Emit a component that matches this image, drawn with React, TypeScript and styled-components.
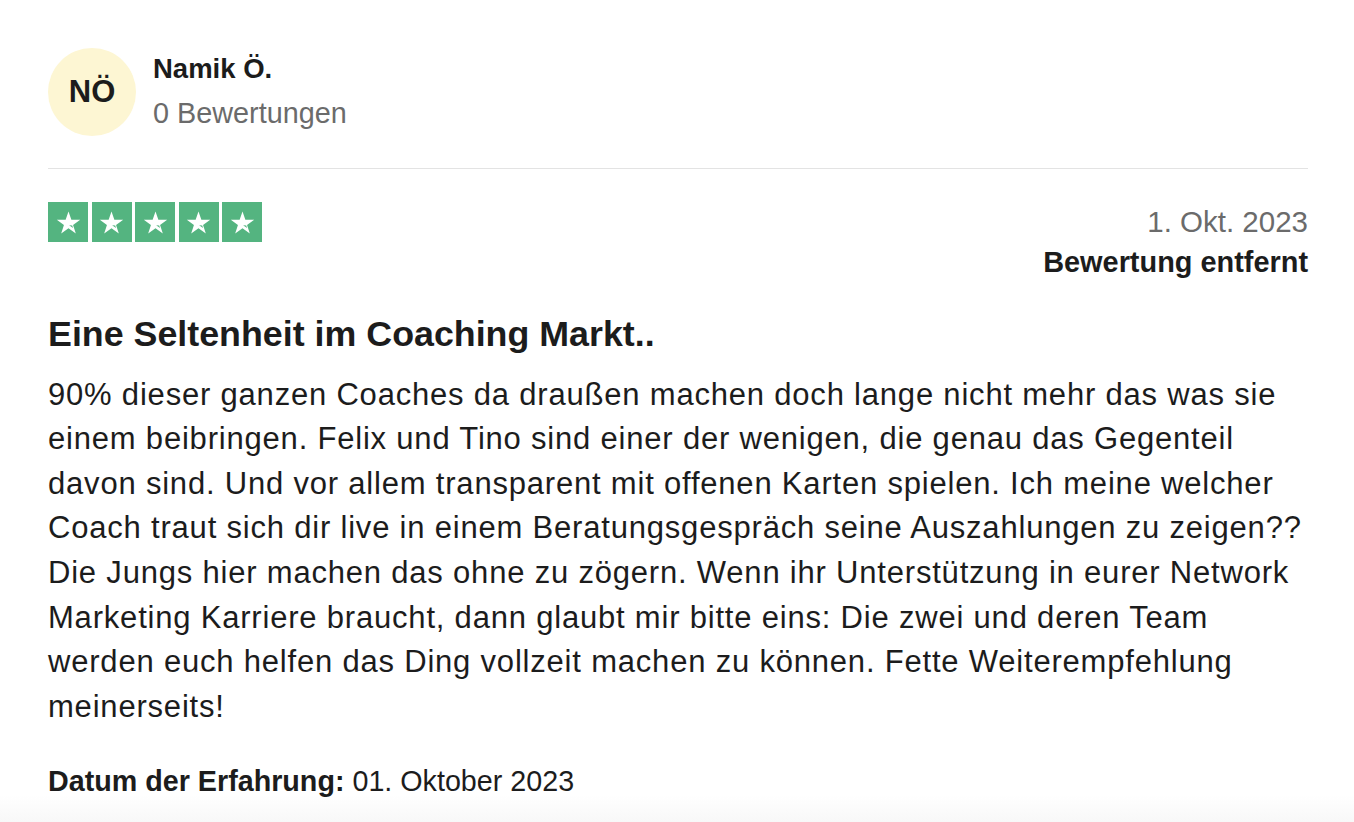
import React from 'react'
import styled, {createGlobalStyle} from 'styled-components'

const GlobalStyle = createGlobalStyle`
    html, body {
        margin: 0;
        padding: 0;
        background: #ffffff;
    }
    body {
        font-family: "Liberation Sans", Arial, Helvetica, sans-serif;
        color: #1c1c1c;
        -webkit-font-smoothing: antialiased;
    }
`

const Page = styled.div`
    width: 1354px;
    height: 822px;
    overflow: hidden;
    box-sizing: border-box;
    padding: 48px 46px 0 48px;
    background: linear-gradient(to bottom, #ffffff 0, #ffffff 795px, #f8f8f8 822px);
`

const Header = styled.div`
    display: flex;
    align-items: flex-start;
    gap: 17px;
    padding-bottom: 32px;
    border-bottom: 1px solid #e3e3e3;
`

const Avatar = styled.div`
    width: 88px;
    height: 88px;
    flex-shrink: 0;
    border-radius: 50%;
    background: #fdf6d3;
    display: flex;
    align-items: center;
    justify-content: center;
    font-size: 31px;
    font-weight: 700;
    color: #1c1c1c;
`

const UserInfo = styled.div`
    display: flex;
    flex-direction: column;
    gap: 8px;
    padding-top: 3px;
`

const UserName = styled.div`
    font-size: 27.5px;
    font-weight: 700;
    line-height: 36px;
`

const UserMeta = styled.div`
    font-size: 28.8px;
    line-height: 36px;
    color: #6b6b6b;
`

const RatingRow = styled.div`
    display: flex;
    justify-content: space-between;
    align-items: flex-start;
    margin-top: 33px;
`

const Stars = styled.div`
    display: flex;
    gap: 3.5px;
`

const StarBox = styled.div`
    width: 40px;
    height: 40px;
    background: #54b480;
    display: flex;
    align-items: center;
    justify-content: center;
`

const DateBlock = styled.div`
    display: flex;
    flex-direction: column;
    align-items: flex-end;
    text-align: right;
`

const PostDate = styled.div`
    font-size: 29.5px;
    line-height: 40px;
    color: #6b6b6b;
`

const Removed = styled.div`
    font-size: 28.9px;
    font-weight: 700;
    line-height: 40px;
`

const Title = styled.h2`
    margin: 30px 0 0 0;
    font-size: 35.8px;
    font-weight: 700;
    line-height: 44px;
`

const Body = styled.p`
    margin: 16.7px 0 0 0;
    font-size: 31px;
    letter-spacing: 0.8px;
    line-height: 44.6px;
    white-space: nowrap;
`

const Experience = styled.div`
    margin-top: 31.5px;
    font-size: 28.7px;
    line-height: 40px;

    strong {
        font-weight: 700;
    }
`

const Star: React.FC = () => (
    <svg width="27" height="27" viewBox="0 0 24 24">
        <path
            d="M12 2.2l2.55 7.45h7.85l-6.35 4.6 2.45 7.55L12 17.15l-6.5 4.65 2.45-7.55-6.35-4.6h7.85z"
            fill="#ffffff"
        />
        <path d="M15.3 14.6l0.7 2.3-3.4-2.4z" fill="#54b480" />
    </svg>
)

const lines = [
    '90% dieser ganzen Coaches da draußen machen doch lange nicht mehr das was sie',
    'einem beibringen. Felix und Tino sind einer der wenigen, die genau das Gegenteil',
    'davon sind. Und vor allem transparent mit offenen Karten spielen. Ich meine welcher',
    'Coach traut sich dir live in einem Beratungsgespräch seine Auszahlungen zu zeigen??',
    'Die Jungs hier machen das ohne zu zögern. Wenn ihr Unterstützung in eurer Network',
    'Marketing Karriere braucht, dann glaubt mir bitte eins: Die zwei und deren Team',
    'werden euch helfen das Ding vollzeit machen zu können. Fette Weiterempfehlung',
    'meinerseits!',
]

const App: React.FC = () => {
    return (
        <Page>
            <GlobalStyle />
            <Header>
                <Avatar>NÖ</Avatar>
                <UserInfo>
                    <UserName>Namik Ö.</UserName>
                    <UserMeta>0 Bewertungen</UserMeta>
                </UserInfo>
            </Header>
            <RatingRow>
                <Stars>
                    {[0, 1, 2, 3, 4].map((i) => (
                        <StarBox key={i}>
                            <Star />
                        </StarBox>
                    ))}
                </Stars>
                <DateBlock>
                    <PostDate>1. Okt. 2023</PostDate>
                    <Removed>Bewertung entfernt</Removed>
                </DateBlock>
            </RatingRow>
            <Title>Eine Seltenheit im Coaching Markt..</Title>
            <Body>
                {lines.map((line, i) => (
                    <React.Fragment key={i}>
                        {line}
                        {i < lines.length - 1 && <br />}
                    </React.Fragment>
                ))}
            </Body>
            <Experience>
                <strong>Datum der Erfahrung:</strong> 01. Oktober 2023
            </Experience>
        </Page>
    )
}

export default App
